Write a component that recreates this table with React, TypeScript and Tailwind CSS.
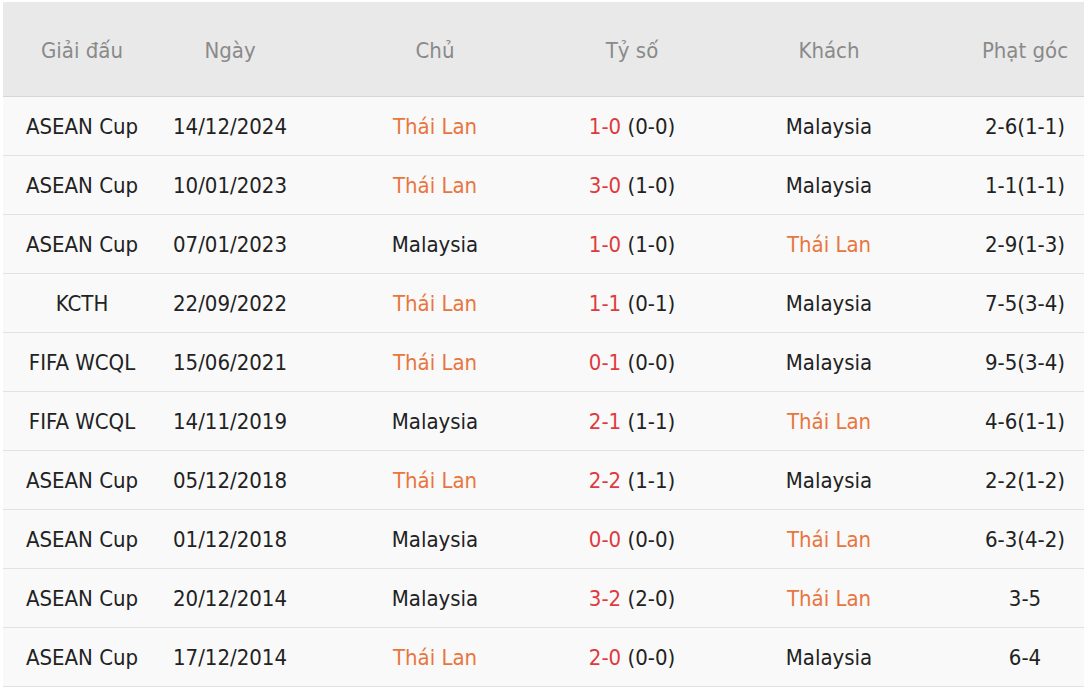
const rows = [
  { league: "ASEAN Cup", date: "14/12/2024", home: "Thái Lan", score: "1-0", half: "(0-0)", away: "Malaysia", corner: "2-6(1-1)" },
  { league: "ASEAN Cup", date: "10/01/2023", home: "Thái Lan", score: "3-0", half: "(1-0)", away: "Malaysia", corner: "1-1(1-1)" },
  { league: "ASEAN Cup", date: "07/01/2023", home: "Malaysia", score: "1-0", half: "(1-0)", away: "Thái Lan", corner: "2-9(1-3)" },
  { league: "KCTH", date: "22/09/2022", home: "Thái Lan", score: "1-1", half: "(0-1)", away: "Malaysia", corner: "7-5(3-4)" },
  { league: "FIFA WCQL", date: "15/06/2021", home: "Thái Lan", score: "0-1", half: "(0-0)", away: "Malaysia", corner: "9-5(3-4)" },
  { league: "FIFA WCQL", date: "14/11/2019", home: "Malaysia", score: "2-1", half: "(1-1)", away: "Thái Lan", corner: "4-6(1-1)" },
  { league: "ASEAN Cup", date: "05/12/2018", home: "Thái Lan", score: "2-2", half: "(1-1)", away: "Malaysia", corner: "2-2(1-2)" },
  { league: "ASEAN Cup", date: "01/12/2018", home: "Malaysia", score: "0-0", half: "(0-0)", away: "Thái Lan", corner: "6-3(4-2)" },
  { league: "ASEAN Cup", date: "20/12/2014", home: "Malaysia", score: "3-2", half: "(2-0)", away: "Thái Lan", corner: "3-5" },
  { league: "ASEAN Cup", date: "17/12/2014", home: "Thái Lan", score: "2-0", half: "(0-0)", away: "Malaysia", corner: "6-4" },
];

const cols = "grid grid-cols-[158px_138px_272px_122px_272px_120px]";

// tên đội: Thái Lan tô cam
const Team = ({ name }: { name: string }) => (
  <span className={name === "Thái Lan" ? "text-[#e8763f]" : "text-[#222]"}>{name}</span>
);

export default function App() {
  return (
    <div className="bg-white w-[1084px] h-[688px] pt-[2px] pl-[3px] overflow-hidden">
      <div
        className="text-[22px] leading-none"
        style={{ fontFamily: '"DejaVu Sans Condensed", "DejaVu Sans", sans-serif', fontStretch: "condensed" }}
      >
        {/* Header */}
        <div className={`${cols} h-[95px] pt-[3px] items-center bg-[#e9e9e9] border-b border-[#d6d6d6] text-[#8a8a8a] text-center`}>
          <div>Giải đấu</div>
          <div>Ngày</div>
          <div>Chủ</div>
          <div>Tỷ số</div>
          <div>Khách</div>
          <div>Phạt góc</div>
        </div>

        {rows.map((r, i) => (
          <div
            key={`row-${i + 1}`}
            className={`${cols} h-[59px] pt-[2px] items-center bg-[#f9f9f9] border-b border-[#e2e2e2] text-[#222] text-center`}
          >
            <div>{r.league}</div>
            <div>{r.date}</div>
            <div><Team name={r.home} /></div>
            <div>
              <span className="text-[#e0393e]">{r.score}</span> {r.half}
            </div>
            <div><Team name={r.away} /></div>
            <div>{r.corner}</div>
          </div>
        ))}
      </div>
    </div>
  );
}
